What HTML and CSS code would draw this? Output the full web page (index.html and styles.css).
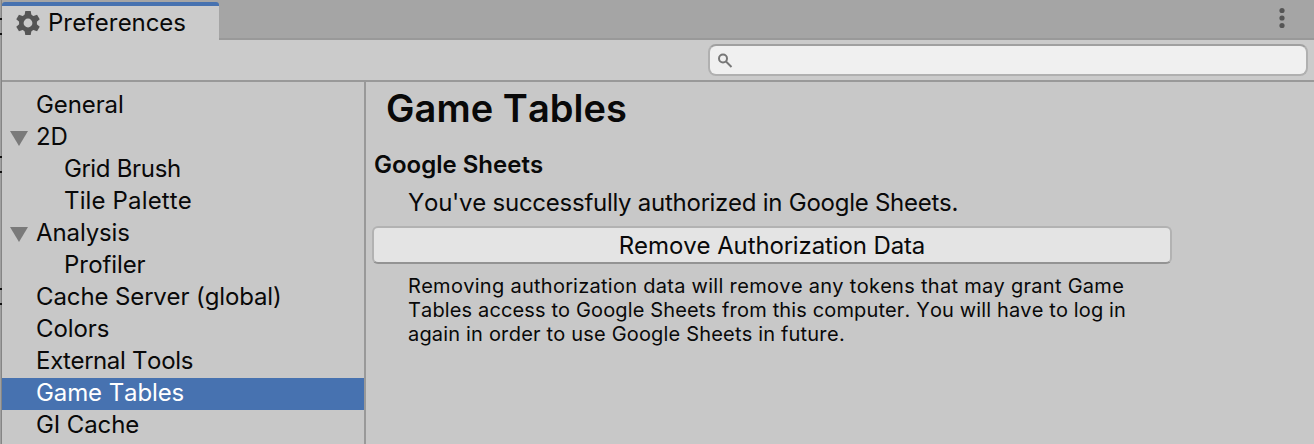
FILE: index.html
```
<!DOCTYPE html>
<html lang="en">
<head>
<meta charset="utf-8">
<title>Preferences</title>
<link rel="stylesheet" href="styles.css">
</head>
<body>
<div class="window">
  <header class="tabbar">
    <div class="tab">
      <svg class="gear" viewBox="0 0 24 24" width="24" height="24"><circle cx="12" cy="12" r="6.700" fill="none" stroke="#555" stroke-width="4.600"/><g fill="#555"><path id="teeth" d="M9.300 0h5.400l.8 4.500h-7zM9.300 24h5.400l.8-4.500h-7z"/><use href="#teeth" transform="rotate(60 12 12)"/><use href="#teeth" transform="rotate(120 12 12)"/></g></svg>
      <span class="tab-label">Preferences</span>
    </div>
    <svg class="more" viewBox="0 0 8 22" width="8" height="22"><g fill="#555"><circle cx="4" cy="3.500" r="2.600"/><circle cx="4" cy="11" r="2.600"/><circle cx="4" cy="18.500" r="2.600"/></g></svg>
  </header>
  <div class="toolbar">
    <div class="search"><svg viewBox="0 0 16 16" width="16" height="16"><g fill="none" stroke="#777" stroke-width="2"><circle cx="5" cy="6.500" r="4"/><path d="M8 9.500l5.500 5.500"/></g></svg></div>
  </div>
  <div class="body">
    <nav class="sidebar">
      <div class="item"><span>General</span></div>
      <div class="item parent"><span>2D</span></div>
      <div class="item child tight"><span>Grid Brush</span></div>
      <div class="item child loose"><span>Tile Palette</span></div>
      <div class="item parent"><span>Analysis</span></div>
      <div class="item child"><span>Profiler</span></div>
      <div class="item"><span>Cache Server (global)</span></div>
      <div class="item"><span>Colors</span></div>
      <div class="item tight"><span>External Tools</span></div>
      <div class="item selected"><span>Game Tables</span></div>
      <div class="item"><span>GI Cache</span></div>
    </nav>
    <main class="content">
      <h1>Game Tables</h1>
      <h2>Google Sheets</h2>
      <p class="status">You've successfully authorized in Google Sheets.</p>
      <button class="remove">Remove Authorization Data</button>
      <p class="note"><span class="wide">Removing authorization data will remove any tokens that may grant Game</span><br><span class="narrow">Tables access to Google Sheets from this computer. You will have to log in</span><br>again in order to use Google Sheets in future.</p>
    </main>
  </div>
</div>
</body>
</html>
```
FILE: styles.css
```
* { box-sizing: border-box; }
body { margin: 0; background: #c8c8c8; color: #090909; font: 24px/32px Inter, sans-serif; font-kerning: none; letter-spacing: -0.1px; overflow: hidden; }
.window {
  display: flex; flex-direction: column; width: 1314px; height: 444px; padding-left: 2px;
  background:
    linear-gradient(#111, #111) 0 18px / 2px 2px no-repeat,
    linear-gradient(#111, #111) 0 33px / 2px 2px no-repeat,
    linear-gradient(#111, #111) 0 156px / 2px 2px no-repeat,
    linear-gradient(#111, #111) 0 171px / 2px 2px no-repeat,
    linear-gradient(#111, #111) 0 288px / 2px 2px no-repeat,
    linear-gradient(#111, #111) 0 303px / 2px 2px no-repeat,
    linear-gradient(90deg, #a0a0a0 1px, #858585 1px, #858585 2px, #c8c8c8 2px);
}
.tabbar { display: flex; justify-content: space-between; height: 40px; padding-top: 2px; background: #a5a5a5; box-shadow: inset 0 -2px #999; }
.tab { display: flex; align-items: center; width: 217px; height: 38px; padding: 4px 0 0 14px; gap: 8px; background: linear-gradient(#4772b0 4px, #cbcbcb 4px); border-radius: 3px 3px 0 0; }
.more { margin: 5px 28px 0 0; }
.toolbar { display: flex; justify-content: flex-end; height: 42px; padding: 4px 6px 0 0; background: #cbcbcb; border-bottom: 2px solid #999; }
.search { display: flex; align-items: center; width: 600px; height: 32px; padding-left: 8px; background: #f0f0f0; border: 2px solid #b0b0b0; border-top-color: #a0a0a0; border-radius: 8px; }
.body { display: flex; flex: 1; min-height: 0; }
.sidebar { width: 364px; padding-top: 8px; border-right: 2px solid #999; overflow: hidden; }
.item { display: flex; align-items: center; height: 32px; padding: 0 0 2px 34px; white-space: nowrap; }
.child { padding-left: 62px; }
.parent { padding-left: 8px; gap: 8px; }
.parent::before { content: ""; width: 18px; height: 15px; margin-top: 3px; background: #7a7a7a; clip-path: polygon(0 0, 100% 0, 50% 100%); }
.tight { letter-spacing: -0.3px; }
.loose { letter-spacing: 0.15px; }
.selected { background: #4772b0; color: #fff; }
.content { flex: 1; padding: 1px 0 0 7px; }
h1 { margin: 0 0 0 13px; font-size: 38px; line-height: 50px; font-weight: 600; letter-spacing: 0.05px; }
h2 { margin: 16px 0 0 1px; font-size: 24px; line-height: 32px; font-weight: 600; letter-spacing: 0; }
p { margin: 0 0 0 35px; white-space: nowrap; }
.status { margin-top: 6px; letter-spacing: -0.25px; }
.remove { display: block; width: 800px; height: 38px; margin: 7px 0 0 -1px; padding: 1px 0 0; background: #e4e4e4; border: 2px solid #b2b2b2; border-bottom-color: #939393; border-radius: 6px; color: inherit; font: inherit; font-kerning: none; letter-spacing: -0.1px; }
.note { margin-top: 10px; font-size: 20px; line-height: 24px; letter-spacing: 0.18px; }
.wide { letter-spacing: 0.285px; }
.narrow { letter-spacing: 0.135px; }
```
